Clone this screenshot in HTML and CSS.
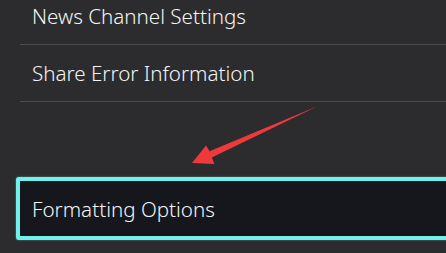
FILE: index.html
```html
<!DOCTYPE html>
<html>
<head>
<meta charset="utf-8">
<link rel="stylesheet" href="styles.css">
</head>
<body>
<div class="screen">
  <ul class="menu">
    <li class="item">News Channel Settings</li>
    <li class="item">Share Error Information</li>
  </ul>
  <div class="focused">Formatting Options</div>
  <svg class="arrow" width="446" height="253" viewBox="0 0 446 253">
    <polygon points="192,163 206,145.5 209.5,151.2 318,106 211.8,157.5 214.5,164" fill="#ef3a3c"/>
  </svg>
</div>
</body>
</html>
```
FILE: styles.css
```css
html, body {
  margin: 0;
  padding: 0;
  background: #2c2b2e;
  overflow: hidden;
}
.screen {
  position: relative;
  width: 446px;
  height: 253px;
  overflow: hidden;
  font-family: "Noto Sans", "Open Sans", sans-serif;
  font-weight: 300;
  color: #f4f4f4;
}
.menu {
  list-style: none;
  margin: -12px 0 0 20px;
  padding: 0;
}
.item {
  height: 56px;
  display: flex;
  align-items: center;
  padding-left: 12px;
  font-size: 20.6px;
  border-bottom: 1px solid #4b4a4e;
}
.focused {
  margin: 75px -20px 0 16px;
  height: 55px;
  border: 4px solid #72f0ee;
  border-radius: 3px;
  background: #16171d;
  display: flex;
  align-items: center;
  padding-left: 12px;
  font-size: 20.6px;
  box-shadow: 0 0 2px rgba(114, 240, 238, 0.6);
}
.arrow {
  position: absolute;
  left: 0;
  top: 0;
  pointer-events: none;
}
```
